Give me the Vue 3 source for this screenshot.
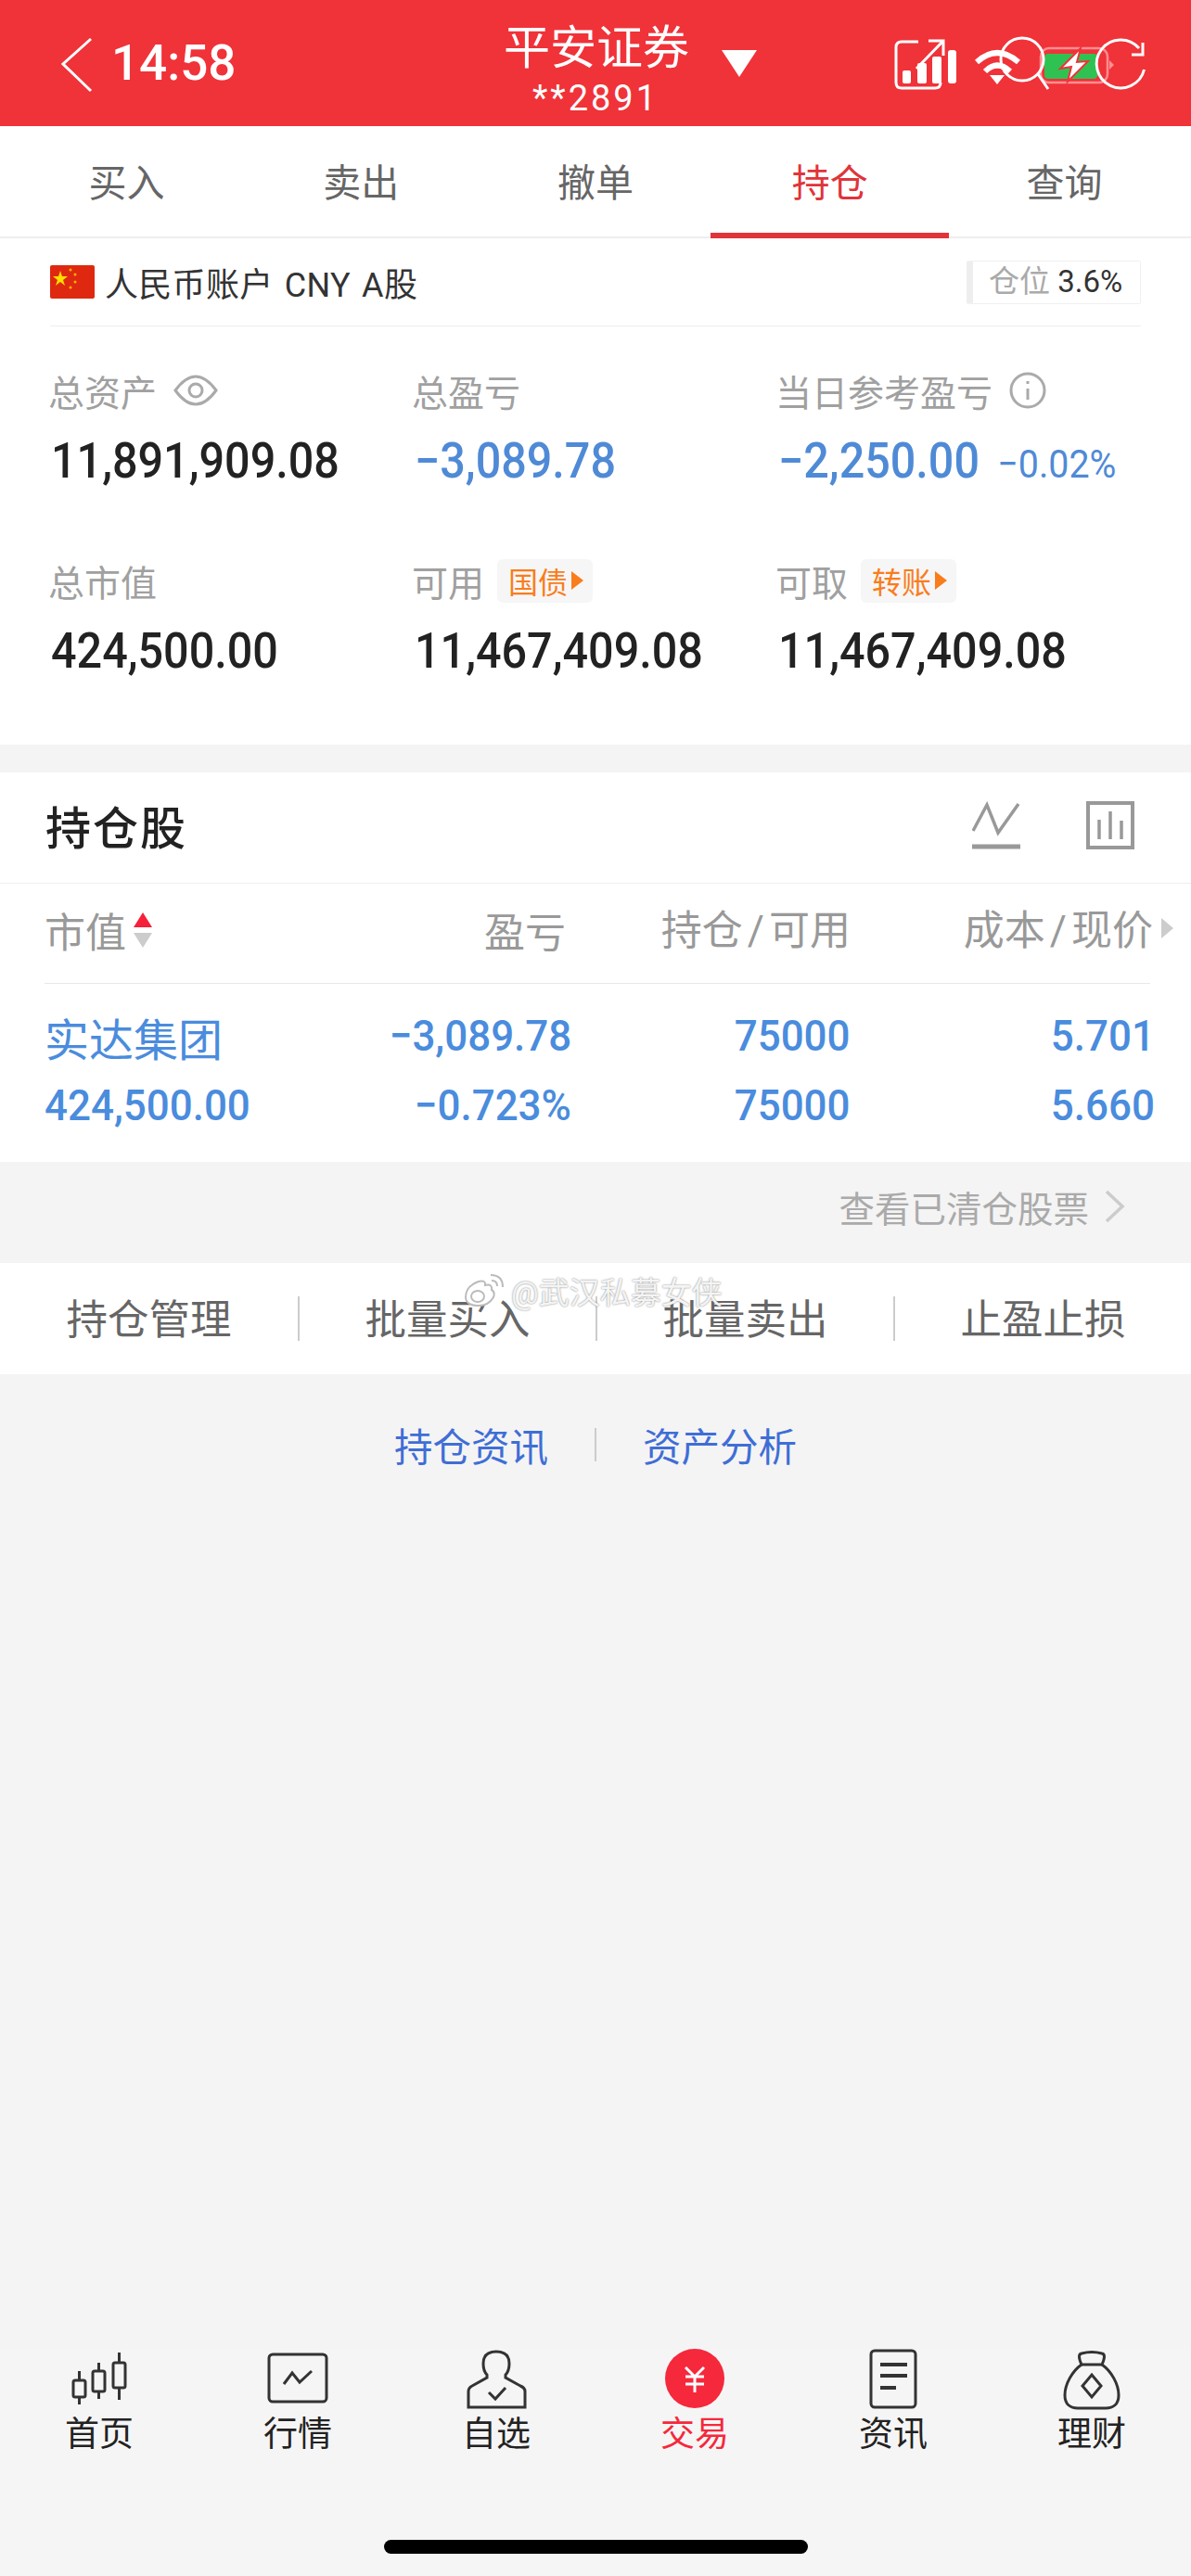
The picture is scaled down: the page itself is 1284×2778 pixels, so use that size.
<template>
  <div class="app">
    <header class="top">
      <svg class="back" width="34" height="60" viewBox="0 0 34 60">
        <polyline points="32,2 2,29 32,58" />
      </svg>
      <span class="time">14:58</span>
      <div class="title">
        <div class="broker">平安证券</div>
        <div class="acct">**2891</div>
      </div>
      <svg class="caret" width="40" height="32" viewBox="0 0 40 32"><path d="M1 2 H39 L20 31 Z" /></svg>
      <svg class="status" width="276" height="62" viewBox="0 0 276 62" fill="none" stroke="#fff">
        <path d="M26 6 H8 Q2 6 2 12 V50 Q2 56 8 56 H44 Q50 56 50 50" stroke-width="3" />
        <path d="M24 35 L52 6 M37 5 H53 V21" stroke-width="3" />
        <g fill="#fff" stroke="none">
          <rect x="9" y="37" width="9" height="14" rx="2" />
          <rect x="25" y="29" width="10" height="22" rx="2" />
          <rect x="41" y="22" width="10" height="29" rx="2" />
          <rect x="58" y="15" width="9" height="36" rx="3" />
          <polygon points="103,42 119,42 111,52" />
        </g>
        <path d="M89 28 Q111 8 134 28 M98 38 Q111 25 125 38" stroke-width="6" />
        <rect x="158" y="13" width="72" height="37" rx="9" stroke="#ff8e92" stroke-width="2.5" />
        <rect x="162" y="19" width="57" height="27" rx="4" fill="#2fc253" stroke="none" />
        <path d="M232 26 L237 31 L232 36 Z" fill="#ff8e92" stroke="none" />
        <polygon points="201,13 179,35 191,33 187,49 209,27 197,28" fill="#fff" stroke="#f03239" stroke-width="2" />
        <circle cx="138" cy="25" r="23" stroke-width="3" />
        <path d="M155 41 L166 57" stroke-width="3" />
        <path d="M264 13 A26 26 0 1 0 269.500 36" stroke-width="3" />
        <path d="M268 7 V20 H256" stroke-width="3" />
      </svg>
    </header>

    <nav class="tabs">
      <div v-for="t in tabs" :key="t" class="tab" :class="{ active: t === '持仓' }">{{ t }}</div>
    </nav>

    <section class="summary">
      <div class="account">
        <svg class="flag" width="48" height="36" viewBox="0 0 48 36">
          <rect width="48" height="36" rx="2" fill="#de2910" />
          <polygon points="11,6 13,12 19,12 14,16 16,22 11,18 6,22 8,16 3,12 9,12" fill="#ffde00" />
          <g fill="#ffb000">
            <circle cx="22" cy="5" r="1.500" />
            <circle cx="27" cy="10" r="1.500" />
            <circle cx="27" cy="18" r="1.500" />
            <circle cx="22" cy="24" r="1.500" />
          </g>
        </svg>
        <span class="acct-name">人民币账户 CNY A股</span>
        <div class="ratio"><span>仓位</span> 3.6%</div>
      </div>

      <div class="stats">
        <div class="stat">
          <div class="label">总资产
            <svg width="48" height="34" viewBox="0 0 48 34" fill="none" stroke="#aaa" stroke-width="3">
              <path d="M2 17 Q24 -13 46 17 Q24 47 2 17 Z" />
              <circle cx="24" cy="17" r="7" />
            </svg>
          </div>
          <div class="num">11,891,909.08</div>
        </div>
        <div class="stat">
          <div class="label">总盈亏</div>
          <div class="num blue">−3,089.78</div>
        </div>
        <div class="stat">
          <div class="label">当日参考盈亏
            <svg width="40" height="40" viewBox="0 0 40 40" fill="none" stroke="#aaa" stroke-width="3">
              <circle cx="20" cy="20" r="18" />
              <path d="M20 18 V30 M20 10 V13" />
            </svg>
          </div>
          <div class="num blue">−2,250.00 <span class="pct">−0.02%</span></div>
        </div>
        <div class="stat">
          <div class="label">总市值</div>
          <div class="num">424,500.00</div>
        </div>
        <div class="stat">
          <div class="label">可用 <span class="pill">国债<i></i></span></div>
          <div class="num">11,467,409.08</div>
        </div>
        <div class="stat">
          <div class="label">可取 <span class="pill">转账<i></i></span></div>
          <div class="num">11,467,409.08</div>
        </div>
      </div>
    </section>

    <section class="holdings">
      <div class="hold-head">
        <h2>持仓股</h2>
        <svg width="52" height="52" viewBox="0 0 52 52" fill="none" stroke="#999">
          <path d="M1 32 L16 4 L28 34 L50 3" stroke-width="3.500" />
          <path d="M0 49 H52" stroke-width="5" />
        </svg>
        <svg class="bars" width="52" height="52" viewBox="0 0 52 52" fill="none" stroke="#999">
          <rect x="2" y="2" width="48" height="48" stroke-width="4" />
          <path d="M14 20 V41 M26 11 V41 M38 21 V41" stroke-width="3.500" />
        </svg>
      </div>

      <div class="table">
        <div class="cols head">
          <div class="sort">市值
            <svg width="20" height="38" viewBox="0 0 20 38">
              <path d="M10 0 L20 16 H0 Z" fill="#f5213a" />
              <path d="M0 22 H20 L10 38 Z" fill="#ccc" />
            </svg>
          </div>
          <div class="c2">盈亏</div>
          <div class="c3">持仓<span class="slash">/</span>可用</div>
          <div class="c4">成本<span class="slash">/</span>现价<i class="more"></i></div>
        </div>
        <div class="cols rows">
          <div class="name">实达集团</div>
          <div v-for="v in ['−3,089.78', '75000', '5.701']" :key="v"><span class="val">{{ v }}</span></div>
          <div><span class="val left">424,500.00</span></div>
          <div v-for="v in ['−0.723%', '75000', '5.660']" :key="v"><span class="val">{{ v }}</span></div>
        </div>
      </div>
    </section>

    <div class="cleared">
      查看已清仓股票
      <svg width="22" height="36" viewBox="0 0 22 36" fill="none" stroke="#ccc" stroke-width="3.500">
        <polyline points="2,2 19,18 2,34" />
      </svg>
    </div>

    <div class="actions">
      <div v-for="a in actions" :key="a" class="action">{{ a }}</div>
    </div>

    <div class="links">
      <span>持仓资讯</span>
      <i></i>
      <span>资产分析</span>
    </div>

    <footer class="bottom">
      <div class="nav">
        <div class="nav-item">
          <svg width="70" height="66" viewBox="0 0 70 66" fill="none" stroke="#333" stroke-width="3">
            <rect x="7" y="34" width="13" height="18" rx="2" />
            <path d="M13.500 24 V34 M13.500 52 V60" />
            <rect x="28" y="24" width="13" height="22" rx="2" />
            <path d="M34.500 15 V24 M34.500 46 V54" />
            <rect x="50" y="15" width="13" height="27" rx="2" />
            <path d="M56.500 4 V15 M56.500 42 V55" />
          </svg>
          <span>首页</span>
        </div>
        <div class="nav-item">
          <svg width="70" height="66" viewBox="0 0 70 66" fill="none" stroke="#333" stroke-width="3">
            <rect x="4" y="6" width="62" height="51" rx="4" />
            <polyline points="20,38 29,26 37,36 50,24" />
          </svg>
          <span>行情</span>
        </div>
        <div class="nav-item">
          <svg width="70" height="66" viewBox="0 0 70 66" fill="none" stroke="#333" stroke-width="3">
            <path d="M5 63 V46 Q5 42 9 40 L25 31 V28 Q21 24 21 16 Q21 3 35 3 Q49 3 49 16 Q49 24 45 28 V31 L61 40 Q66 42 66 46 V63 Z" />
            <polyline points="27,47 34,54 45,42" />
          </svg>
          <span>自选</span>
        </div>
        <div class="nav-item on">
          <svg width="70" height="66" viewBox="0 0 70 66" fill="none" stroke="#fff" stroke-width="3">
            <circle cx="35" cy="32" r="32" fill="#f5283c" stroke="none" />
            <path d="M25 20 L35 30 L45 20 M35 30 V47 M25 30 H45 M25 38 H45" />
          </svg>
          <span>交易</span>
        </div>
        <div class="nav-item">
          <svg width="70" height="66" viewBox="0 0 70 66" fill="none" stroke="#333" stroke-width="3">
            <rect x="11" y="2" width="48" height="61" rx="4" />
            <path d="M21 17 H50 M21 29 H50 M21 42 H38" stroke-width="4" />
          </svg>
          <span>资讯</span>
        </div>
        <div class="nav-item">
          <svg width="70" height="66" viewBox="0 0 70 66" fill="none" stroke="#333" stroke-width="3">
            <path d="M24 17 Q19 6 24 5 Q35 2 46 5 Q51 6 46 17 Z" />
            <path d="M24 17 C14 24 6 38 6 50 C6 60 12 64 20 64 H50 C58 64 64 60 64 50 C64 38 56 24 46 17" />
            <path d="M35 28 L45 40 L35 52 L25 40 Z" />
          </svg>
          <span>理财</span>
        </div>
      </div>
      <div class="home-bar"></div>
    </footer>

    <div class="watermark">
      <svg width="48" height="38" viewBox="0 0 48 38" fill="none" stroke="#bbb" stroke-width="2">
        <path d="M4 26 Q4 14 18 9 Q26 7 25 13 Q33 11 32 18 Q36 20 34 26 Q28 36 16 35 Q4 34 4 26 Z" fill="#fff" />
        <ellipse cx="17" cy="25" rx="7" ry="6" />
        <path d="M32 8 Q38 8 38 14 M31 2 Q44 2 44 15" />
      </svg>
      <span>@武汉私募女侠</span>
    </div>
  </div>
</template>

<script setup>
const tabs = ['买入', '卖出', '撤单', '持仓', '查询'];
const actions = ['持仓管理', '批量买入', '批量卖出', '止盈止损'];
</script>

<style>
body {
  background: #f4f4f4;
}
</style>

<style scoped>
.app {
  position: relative;
  display: flex;
  flex-direction: column;
  min-height: 2778px;
  background: #f4f4f4;
  font-family: Roboto, "Noto Sans CJK SC", sans-serif;
  overflow: hidden;
}
.top {
  display: flex;
  align-items: center;
  height: 136px;
  padding: 0 44px 0 66px;
  box-sizing: border-box;
  background: #f03239;
  color: #fff;
}
.back {
  margin-top: 3px;
  fill: none;
  stroke: #fff;
  stroke-width: 3;
}
.time {
  width: 423px;
  margin-left: 20px;
  font-size: 53px;
  font-weight: 500;
}
.title {
  width: 198px;
  padding-top: 14px;
  text-align: center;
  white-space: nowrap;
}
.broker {
  font-size: 50px;
  line-height: 56px;
}
.acct {
  margin-top: 5px;
  font-size: 38px;
  line-height: 42px;
  letter-spacing: 3px;
}
.caret {
  margin-left: 36px;
  fill: #fff;
}
.status {
  margin-left: auto;
  margin-top: 4px;
}
.tabs {
  display: grid;
  grid-template-columns: repeat(5, 1fr);
  height: 121px;
  padding: 0 10px;
  box-sizing: border-box;
  background: #fff;
  border-bottom: 2px solid #eee;
}
.tab {
  height: 121px;
  box-sizing: border-box;
  padding-top: 34px;
  text-align: center;
  font-size: 41px;
  line-height: 56px;
  color: #666;
}
.tab.active {
  margin: 0 -2px;
  color: #e0343a;
  border-bottom: 6px solid #e0343a;
}
.summary {
  height: 546px;
  background: #fff;
}
.account {
  display: flex;
  align-items: center;
  height: 95px;
  margin: 0 54px;
  border-bottom: 1px solid #eee;
  box-sizing: border-box;
}
.flag {
  margin-right: 11px;
}
.acct-name {
  font-size: 36px;
  word-spacing: 3px;
  letter-spacing: 0.3px;
  color: #333;
}
.ratio {
  margin-left: auto;
  width: 188px;
  height: 47px;
  box-sizing: border-box;
  border: 1px solid #f0f0f0;
  border-left: 7px solid #eee;
  padding-left: 17px;
  border-radius: 2px;
  font-size: 33px;
  line-height: 44px;
  white-space: nowrap;
  color: #333;
}
.ratio span {
  color: #aaa;
}
.stats {
  display: grid;
  grid-template-columns: repeat(3, 392px);
  row-gap: 78px;
  padding: 47px 0 0 55px;
}
.label {
  display: flex;
  align-items: center;
  gap: 18px;
  height: 44px;
  margin-left: -3px;
  font-size: 39px;
  color: #a0a0a0;
}
.num {
  height: 60px;
  margin-top: 24px;
  margin-bottom: -1px;
  font-size: 53px;
  line-height: 60px;
  font-weight: 500;
  color: #222;
  white-space: nowrap;
  transform: scaleX(0.915);
  transform-origin: left center;
}
.num.blue {
  color: #4f8ad6;
}
.pct {
  margin-left: 8px;
  font-size: 43px;
  font-weight: 400;
}
.pill {
  display: inline-flex;
  align-items: center;
  gap: 4px;
  height: 47px;
  margin-left: -4px;
  padding: 0 10px 0 12px;
  background: #f6f6f6;
  border-radius: 6px;
  font-size: 32px;
  color: #f97d1c;
}
.pill i {
  width: 0;
  height: 0;
  border-left: 13px solid #f97d1c;
  border-top: 10px solid transparent;
  border-bottom: 10px solid transparent;
}
.holdings {
  margin-top: 30px;
  background: #fff;
}
.hold-head {
  display: flex;
  align-items: center;
  height: 120px;
  padding: 0 61px 6px 49px;
  box-sizing: border-box;
  border-bottom: 1px solid #eee;
}
.hold-head h2 {
  margin: 0 auto 0 0;
  font-size: 49px;
  font-weight: 500;
  letter-spacing: 2px;
  color: #222;
}
.bars {
  margin-left: 71px;
}
.table {
  margin: 0 39px 0 48px;
}
.cols {
  display: grid;
  grid-template-columns: 320px 248px 301px 328px;
}
.head {
  height: 108px;
  margin-right: 5px;
  padding-bottom: 8px;
  align-items: center;
  border-bottom: 1px solid #e8e8e8;
  box-sizing: border-box;
  font-size: 44px;
  color: #999;
  text-align: right;
}
.sort {
  display: flex;
  align-items: center;
  gap: 8px;
  text-align: left;
}
.c2 {
  padding-right: 6px;
}
.c3 {
  margin-top: -5px;
}
.c4 {
  position: relative;
  padding-right: 2px;
  margin-top: -5px;
}
.slash {
  margin: 0 5px;
}
.more {
  position: absolute;
  top: 22px;
  right: -20px;
  border-left: 13px solid #ccc;
  border-top: 11px solid transparent;
  border-bottom: 11px solid transparent;
}
.rows {
  row-gap: 31px;
  padding: 34px 0 39px;
  color: #4a8cdd;
  text-align: right;
}
.rows > div {
  height: 44px;
}
.name {
  font-size: 48px;
  line-height: 56px;
  text-align: left;
}
.val {
  display: inline-block;
  font-size: 47px;
  line-height: 44px;
  font-weight: 500;
  white-space: nowrap;
  transform: scaleX(0.935);
  transform-origin: right center;
}
.val.left {
  display: block;
  text-align: left;
  transform-origin: left center;
}
.cleared {
  display: flex;
  align-items: center;
  justify-content: flex-end;
  gap: 17px;
  height: 109px;
  padding: 0 71px 14px 0;
  box-sizing: border-box;
  font-size: 38.500px;
  color: #aaa;
}
.actions {
  display: grid;
  grid-template-columns: repeat(4, 1fr);
  align-items: center;
  height: 120px;
  background: #fff;
}
.action {
  height: 48px;
  text-align: center;
  font-size: 44.500px;
  line-height: 52px;
  color: #666;
}
.action + .action {
  border-left: 2px solid #ccc;
}
.links {
  display: flex;
  justify-content: center;
  align-items: center;
  gap: 50px;
  height: 44px;
  margin-top: 54px;
  font-size: 41.500px;
  color: #3f6ed6;
}
.links i {
  width: 2px;
  height: 36px;
  background: #ccc;
}
.bottom {
  margin-top: auto;
  background: #f5f5f5;
}
.nav {
  display: grid;
  grid-template-columns: repeat(6, 1fr);
}
.nav-item {
  display: flex;
  flex-direction: column;
  align-items: center;
  gap: 5px;
  font-size: 37px;
  line-height: 44px;
  color: #222;
}
.nav-item.on {
  color: #f5283c;
}
.home-bar {
  width: 457px;
  height: 15px;
  margin: 91px auto 24px;
  background: #000;
  border-radius: 8px;
}
.watermark {
  position: absolute;
  left: 498px;
  top: 1368px;
  display: flex;
  align-items: center;
  gap: 5px;
  font-size: 33px;
  color: #f4f4f4;
  text-shadow: 0 0 2px #777;
}
</style>
